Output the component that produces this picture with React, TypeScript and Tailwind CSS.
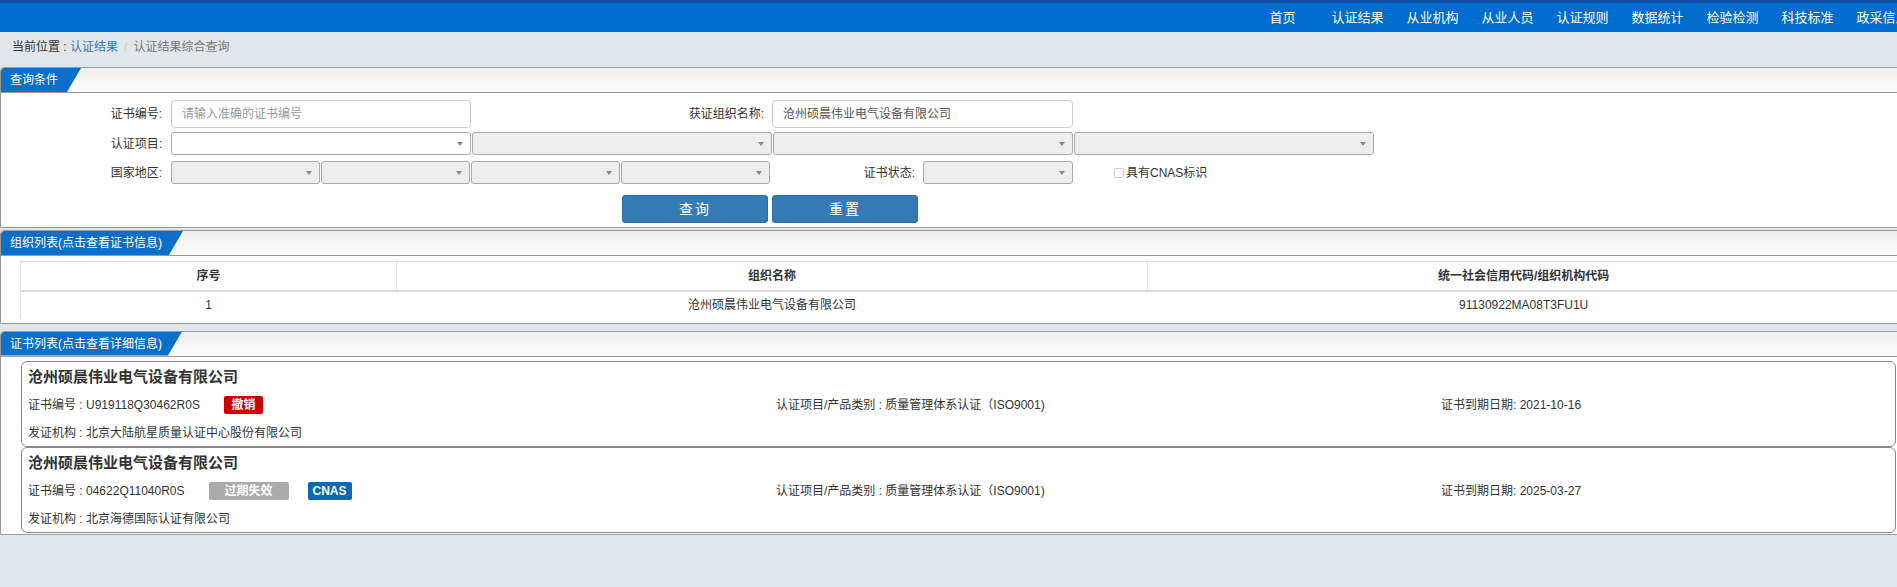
import React from 'react'

const FONT = '"Liberation Sans", "Noto Sans CJK SC", Arial, sans-serif'

const NAV = ['首页', '认证结果', '从业机构', '从业人员', '认证规则', '数据统计', '检验检测', '科技标准', '政采信息']

function Tab({ title, width }: { title: string; width: string }) {
  return (
    <div className={`${width} h-full bg-[#0b6fca] text-white text-[12px] leading-[24px] pl-[9px] rounded-tl-[4px] whitespace-nowrap [clip-path:polygon(0_0,100%_0,calc(100%-14px)_100%,0_100%)]`}>
      {title}
    </div>
  )
}

function PanelHeader({ title, width }: { title: string; width: string }) {
  return (
    <div className="h-[25px] border-b border-[#9a9a9a] bg-gradient-to-b from-[#efefef] to-[#fcfcfc] rounded-tl-[4px]">
      <Tab title={title} width={width} />
    </div>
  )
}

function Select({ width, height, disabled }: { width: string; height: string; disabled?: boolean }) {
  return (
    <div className={`${width} ${height} shrink-0 border border-[#aaa] rounded-[3px] flex items-center justify-end pr-[7px] ${disabled ? 'bg-[#eeeeee]' : 'bg-white'}`}>
      <span className="w-0 h-0 border-l-[3px] border-r-[3px] border-t-[4px] border-l-transparent border-r-transparent border-t-[#888]" />
    </div>
  )
}

function Badge({ text, color, width, ml }: { text: string; color: string; width: string; ml: string }) {
  return (
    <span className={`${color} ${width} ${ml} h-[18px] rounded-[2px] text-white font-bold text-[12px] leading-[18px] text-center inline-block`}>
      {text}
    </span>
  )
}

function CertCard({ no, badges, expire, issuer }: { no: string; badges: React.ReactNode; expire: string; issuer: string }) {
  return (
    <div className="border border-[#888] rounded-[6px] bg-white pl-[6px] pt-[5px] pb-[3px]">
      <div className="h-[20px] leading-[20px] text-[15px] font-bold text-[#333]">沧州硕晨伟业电气设备有限公司</div>
      <div className="mt-[8px] h-[20px] flex items-center text-[12px] text-[#333]">
        <div className="w-[748px] flex items-center">
          <span>证书编号 : {no}</span>
          {badges}
        </div>
        <div className="w-[665px]">认证项目/产品类别 : 质量管理体系认证（ISO9001)</div>
        <div>证书到期日期: {expire}</div>
      </div>
      <div className="mt-[8px] h-[20px] leading-[20px] text-[12px] text-[#333]">发证机构 : {issuer}</div>
    </div>
  )
}

export default function App() {
  return (
    <div className="w-full min-h-[587px] overflow-hidden bg-[#e1e6ea]" style={{ fontFamily: FONT }}>
      <div className="w-[1920px]">
        {/* top bar */}
        <div className="h-[3px] bg-[#0b4d9f]" />
        <div className="h-[29px] bg-[#006ccd] flex justify-end">
          {NAV.map((n) => (
            <div key={n} className="w-[75px] text-center text-white text-[13px] leading-[29px] whitespace-nowrap">{n}</div>
          ))}
        </div>

        {/* breadcrumb */}
        <div className="h-[35px] pt-[5px] pl-[12px] text-[12px] leading-[20px] flex">
          <span className="text-[#333]">当前位置 :&nbsp;</span>
          <span className="text-[#3d78b3]">认证结果</span>
          <span className="text-[#ccc] px-[6px]">/</span>
          <span className="text-[#777]">认证结果综合查询</span>
        </div>

        {/* query panel */}
        <div className="border border-[#9a9a9a] rounded-tl-[4px] bg-white">
          <PanelHeader title="查询条件" width="w-[80px]" />
          <div className="pt-[7px] pb-[4px] text-[12px] text-[#333]">
            <div className="flex items-center h-[28px]">
              <div className="w-[161px] text-right">证书编号:</div>
              <div className="ml-[9px] w-[300px] h-[28px] border border-[#ccc] rounded-[4px] pl-[10px] flex items-center text-[#999]">请输入准确的证书编号</div>
              <div className="w-[293px] text-right">获证组织名称:</div>
              <div className="ml-[8px] w-[301px] h-[28px] border border-[#ccc] rounded-[4px] pl-[10px] flex items-center text-[#555]">沧州硕晨伟业电气设备有限公司</div>
            </div>
            <div className="flex items-center mt-[4px]">
              <div className="w-[161px] text-right">认证项目:</div>
              <div className="ml-[9px] flex gap-[1px]">
                <Select width="w-[300px]" height="h-[23px]" />
                <Select width="w-[300px]" height="h-[23px]" disabled />
                <Select width="w-[300px]" height="h-[23px]" disabled />
                <Select width="w-[300px]" height="h-[23px]" disabled />
              </div>
            </div>
            <div className="flex items-center mt-[6px]">
              <div className="w-[161px] text-right">国家地区:</div>
              <div className="ml-[9px] flex gap-[1px]">
                <Select width="w-[149px]" height="h-[23px]" disabled />
                <Select width="w-[149px]" height="h-[23px]" disabled />
                <Select width="w-[149px]" height="h-[23px]" disabled />
                <Select width="w-[149px]" height="h-[23px]" disabled />
              </div>
              <div className="w-[145px] text-right">证书状态:</div>
              <div className="ml-[8px]">
                <Select width="w-[150px]" height="h-[23px]" disabled />
              </div>
              <div className="ml-[41px] flex items-center">
                <span className="w-[10px] h-[10px] border border-[#ccc] bg-white rounded-[2px]" />
                <span className="ml-[2px]">具有CNAS标识</span>
              </div>
            </div>
            <div className="flex mt-[11px] ml-[621px] gap-[4px]">
              <button className="w-[146px] h-[28px] bg-[#337ab7] border border-[#2e6da4] rounded-[3px] text-white text-[14px] tracking-[2px]">查询</button>
              <button className="w-[146px] h-[28px] bg-[#337ab7] border border-[#2e6da4] rounded-[3px] text-white text-[14px] tracking-[2px]">重置</button>
            </div>
          </div>
        </div>

        {/* org list */}
        <div className="mt-[2px] border border-[#9a9a9a] rounded-tl-[4px] bg-white">
          <PanelHeader title="组织列表(点击查看证书信息)" width="w-[182px]" />
          <div className="px-[19px] pt-[5px] pb-[4px]">
            <table className="w-full border-collapse text-[12px] text-[#333]">
              <thead>
                <tr className="h-[29px]">
                  <th className="w-[20%] border border-[#ddd] border-b-2 font-bold">序号</th>
                  <th className="w-[40%] border border-[#ddd] border-b-2 font-bold">组织名称</th>
                  <th className="w-[40%] border border-[#ddd] border-b-2 font-bold">统一社会信用代码/组织机构代码</th>
                </tr>
              </thead>
              <tbody>
                <tr className="h-[28px]">
                  <td className="text-center border-l border-[#ddd]">1</td>
                  <td className="text-center">沧州硕晨伟业电气设备有限公司</td>
                  <td className="text-center">91130922MA08T3FU1U</td>
                </tr>
              </tbody>
            </table>
          </div>
        </div>

        {/* cert list */}
        <div className="mt-[7px] border border-[#9a9a9a] rounded-tl-[4px] bg-white">
          <PanelHeader title="证书列表(点击查看详细信息)" width="w-[181px]" />
          <div className="pl-[20px] pr-[23px] pt-[4px] pb-[1px]">
            <CertCard
              no="U919118Q30462R0S"
              badges={<Badge text="撤销" color="bg-[#cc0000]" width="w-[39px]" ml="ml-[24px]" />}
              expire="2021-10-16"
              issuer="北京大陆航星质量认证中心股份有限公司"
            />
            <CertCard
              no="04622Q11040R0S"
              badges={
                <>
                  <Badge text="过期失效" color="bg-[#aaaaaa]" width="w-[80px]" ml="ml-[24px]" />
                  <Badge text="CNAS" color="bg-[#0a68b6]" width="w-[44px]" ml="ml-[19px]" />
                </>
              }
              expire="2025-03-27"
              issuer="北京海德国际认证有限公司"
            />
          </div>
        </div>
      </div>
    </div>
  )
}
